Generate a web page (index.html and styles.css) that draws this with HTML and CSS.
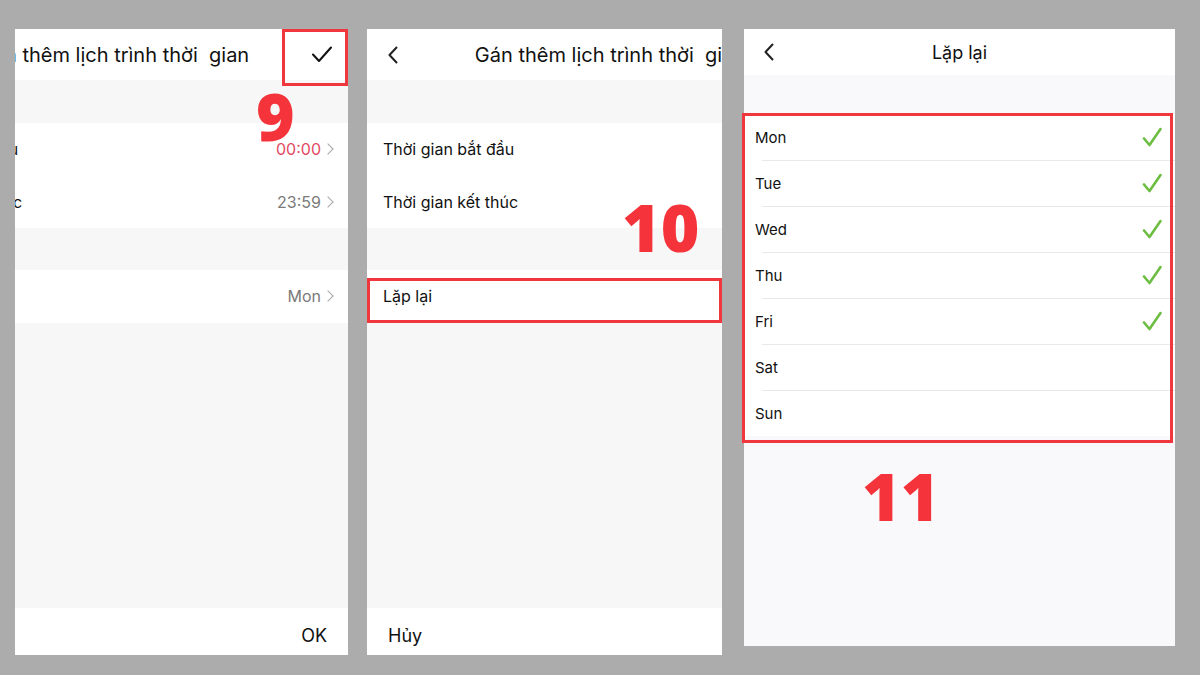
FILE: index.html
```html
<!DOCTYPE html>
<html lang="vi">
<head>
    <meta charset="UTF-8">
    <meta name="viewport" content="width=device-width, initial-scale=1.0">
    <title>Lặp lại</title>
    <link rel="stylesheet" href="styles.css">
</head>
<body>
    <div class="stage">
        <!-- màn hình 1: phần bên phải -->
        <section class="phone phone-a">
            <div class="screen shift">
                <header class="bar">
                    <span class="bar-side">
                        <svg class="back" viewBox="0 0 10 18"><path d="M8.5 1.5 1.5 9l7 7.5"/></svg>
                    </span>
                    <h1 class="bar-title">Gán thêm lịch trình thời&nbsp; gian</h1>
                    <span class="bar-side right">
                        <svg class="done" viewBox="0 0 20 17"><path d="M1 8.5 7 15 19 1.5"/></svg>
                    </span>
                </header>
                <div class="gap"></div>
                <ul class="group">
                    <li class="row"><span>Thời gian bắt đầu</span><span class="val hot">00:00<i class="chev"></i></span></li>
                    <li class="row"><span>Thời gian kết thúc</span><span class="val">23:59<i class="chev"></i></span></li>
                </ul>
                <div class="gap"></div>
                <ul class="group">
                    <li class="row"><span>Lặp lại</span><span class="val">Mon<i class="chev"></i></span></li>
                </ul>
                <div class="fill"></div>
                <footer class="foot"><span>Hủy</span><span>OK</span></footer>
            </div>
        </section>

        <!-- màn hình 2: phần bên trái -->
        <section class="phone phone-b">
            <div class="screen">
                <header class="bar">
                    <span class="bar-side">
                        <svg class="back" viewBox="0 0 10 18"><path d="M8.5 1.5 1.5 9l7 7.5"/></svg>
                    </span>
                    <h1 class="bar-title">Gán thêm lịch trình thời&nbsp; gian</h1>
                    <span class="bar-side right">
                        <svg class="done" viewBox="0 0 20 17"><path d="M1 8.5 7 15 19 1.5"/></svg>
                    </span>
                </header>
                <div class="gap"></div>
                <ul class="group">
                    <li class="row"><span>Thời gian bắt đầu</span><span class="val hot">00:00<i class="chev"></i></span></li>
                    <li class="row"><span>Thời gian kết thúc</span><span class="val">23:59<i class="chev"></i></span></li>
                </ul>
                <div class="gap"></div>
                <ul class="group">
                    <li class="row"><span>Lặp lại</span><span class="val">Mon<i class="chev"></i></span></li>
                </ul>
                <div class="fill"></div>
                <footer class="foot"><span>Hủy</span><span>OK</span></footer>
            </div>
        </section>

        <!-- màn hình 3: chọn ngày -->
        <section class="phone phone-c">
            <header class="bar small">
                <span class="bar-side">
                    <svg class="back" viewBox="0 0 10 18"><path d="M8.5 1.5 1.5 9l7 7.5"/></svg>
                </span>
                <h1 class="bar-title">Lặp lại</h1>
                <span class="bar-side right"></span>
            </header>
            <div class="gap thin"></div>
            <ul class="days">
                <li class="day"><span>Mon</span><svg class="tick" viewBox="0 0 20 21"><path d="M2 11.5 7.5 18 18.5 2"/></svg></li>
                <li class="day"><span>Tue</span><svg class="tick" viewBox="0 0 20 21"><path d="M2 11.5 7.5 18 18.5 2"/></svg></li>
                <li class="day"><span>Wed</span><svg class="tick" viewBox="0 0 20 21"><path d="M2 11.5 7.5 18 18.5 2"/></svg></li>
                <li class="day"><span>Thu</span><svg class="tick" viewBox="0 0 20 21"><path d="M2 11.5 7.5 18 18.5 2"/></svg></li>
                <li class="day"><span>Fri</span><svg class="tick" viewBox="0 0 20 21"><path d="M2 11.5 7.5 18 18.5 2"/></svg></li>
                <li class="day"><span>Sat</span></li>
                <li class="day"><span>Sun</span></li>
            </ul>
            <div class="fill"></div>
        </section>

        <!-- khung đỏ và số bước -->
        <div class="mark mark-done"></div>
        <div class="mark mark-repeat"></div>
        <div class="mark mark-days"></div>
        <span class="step step-9">9</span>
        <span class="step step-10">10</span>
        <span class="step step-11">11</span>
    </div>
</body>
</html>
```

FILE: styles.css
```css
* {
    margin: 0;
    padding: 0;
    box-sizing: border-box;
}
body {
    width: 1200px;
    height: 675px;
    overflow: hidden;
    background: #acacac;
    font-family: Inter, "Noto Sans", sans-serif;
    color: #111;
}
ul {
    list-style: none;
}

.stage {
    position: relative;
    display: flex;
    align-items: flex-start;
    height: 100%;
    padding: 29px 0 0 15px;
}

.phone {
    height: 626px;
    overflow: hidden;
    background: #f7f7f7;
    display: flex;
    flex-direction: column;
}
.phone-a {
    width: 333px;
}
.phone-b {
    width: 355px;
    margin-left: 19px;
}
.phone-c {
    width: 431px;
    height: 617px;
    margin-left: 22px;
    background: #f9f9fb;
}

/* cả hai màn đầu là cùng một màn rộng 477px */
.screen {
    width: 477px;
    height: 100%;
    flex: none;
    display: flex;
    flex-direction: column;
}
.screen.shift {
    margin-left: -144px;
}

.bar {
    height: 51px;
    background: #fff;
    display: flex;
    align-items: center;
    padding: 0 16px 0 21px;
    flex: none;
}
.bar.small {
    height: 46px;
    padding: 0 20px;
}
.bar-side {
    width: 24px;
    display: flex;
    align-items: center;
}
.bar-side.right {
    justify-content: flex-end;
}
.bar-title {
    flex: 1;
    text-align: center;
    font-size: 20px;
    font-weight: 400;
    white-space: nowrap;
    padding-left: 4px;
}
.small .bar-title {
    font-size: 18px;
    padding-left: 0;
}
.back {
    width: 10px;
    height: 18px;
    fill: none;
    stroke: #222;
    stroke-width: 2;
    stroke-linecap: round;
    stroke-linejoin: round;
}
.done {
    width: 20px;
    height: 17px;
    fill: none;
    stroke: #111;
    stroke-width: 2;
    stroke-linecap: round;
    stroke-linejoin: round;
}

.gap {
    height: 43px;
    flex: none;
}
.group + .gap {
    height: 42px;
}
.gap.thin {
    height: 39px;
}
.fill {
    flex: 1;
}

.group {
    background: #fff;
}
.row {
    height: 52.5px;
    display: flex;
    align-items: center;
    justify-content: space-between;
    padding: 0 16px;
    font-size: 16px;
}
.val {
    display: flex;
    align-items: center;
    color: #7a7a7a;
}
.val.hot {
    color: #e24a62;
}
.chev {
    width: 8px;
    height: 8px;
    margin-left: 3px;
    border-top: 1.5px solid #a8a8a8;
    border-right: 1.5px solid #a8a8a8;
    transform: rotate(45deg);
}

.foot {
    height: 47px;
    flex: none;
    background: #fff;
    display: flex;
    align-items: center;
    justify-content: space-between;
    padding: 8px 21px 0 21px;
    font-size: 18px;
}

.days {
    background: #fff;
}
.day {
    height: 46px;
    display: flex;
    align-items: center;
    justify-content: space-between;
    padding: 0 13px 0 11px;
    font-size: 15px;
    position: relative;
}
.day + .day::before {
    content: "";
    position: absolute;
    top: 0;
    left: 18px;
    right: 0;
    border-top: 1px solid #e8e8e8;
}
.tick {
    width: 20px;
    height: 21px;
    fill: none;
    stroke: #6cbd42;
    stroke-width: 2.6;
    stroke-linecap: round;
    stroke-linejoin: round;
}

/* chú thích đè lên ảnh */
.mark {
    position: absolute;
    border: 3px solid #ef373d;
}
.mark-done {
    left: 282px;
    top: 29px;
    width: 66px;
    height: 57px;
}
.mark-repeat {
    left: 367px;
    top: 278px;
    width: 355px;
    height: 45px;
}
.mark-days {
    left: 742px;
    top: 113px;
    width: 431px;
    height: 330px;
}
.step {
    position: absolute;
    font-family: "Open Sans", sans-serif;
    font-weight: 800;
    font-size: 66px;
    line-height: 0.8;
    color: #f5333a;
}
.step-9 {
    left: 256px;
    top: 89px;
}
.step-10 {
    left: 622px;
    top: 200px;
}
.step-11 {
    left: 862px;
    top: 469px;
}
```
